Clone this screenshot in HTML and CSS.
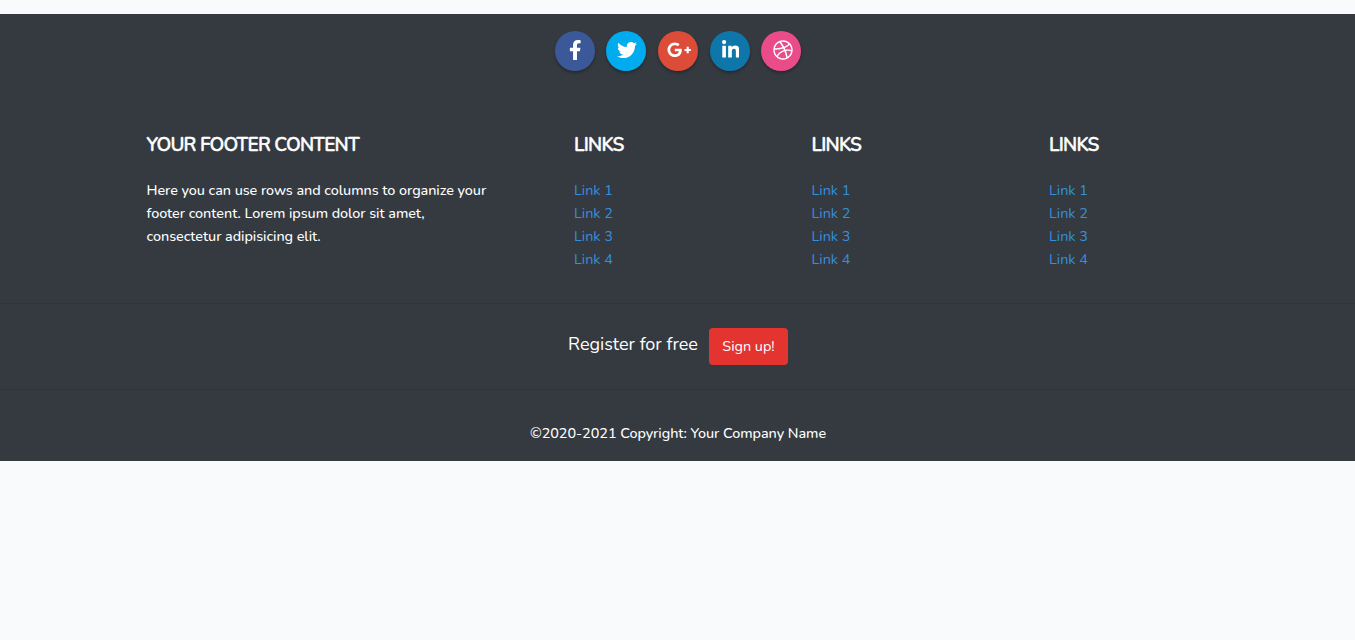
FILE: index.html
```html
<!DOCTYPE html>
<html lang="en">
<head>
<meta charset="utf-8">
<title>Footer</title>
<link rel="stylesheet" href="styles.css">
</head>
<body>
<footer class="footer">
  <ul class="social">
    <li><a class="social-btn facebook" href="#" aria-label="Facebook"><svg viewBox="0 0 320 512" width="12.5" height="20"><path d="M279.14 288l14.22-92.66h-88.91v-60.13c0-25.35 12.42-50.06 52.24-50.06h40.42V6.26S260.43 0 225.36 0c-73.22 0-121.08 44.38-121.08 124.72v70.62H22.89V288h81.39v224h100.17V288z"/></svg></a></li>
    <li><a class="social-btn twitter" href="#" aria-label="Twitter"><svg viewBox="0 0 512 512" width="20" height="20"><path d="M459.37 151.716c.325 4.548.325 9.097.325 13.645 0 138.72-105.583 298.558-298.558 298.558-59.452 0-114.68-17.219-161.137-47.106 8.447.974 16.568 1.299 25.34 1.299 49.055 0 94.213-16.568 130.274-44.832-46.132-.975-84.792-31.188-98.112-72.772 6.498.974 12.995 1.624 19.818 1.624 9.421 0 18.843-1.3 27.614-3.573-48.081-9.747-84.143-51.98-84.143-102.985v-1.299c13.969 7.797 30.214 12.67 47.431 13.319-28.264-18.843-46.781-51.005-46.781-87.391 0-19.492 5.197-37.36 14.294-52.954 51.655 63.675 129.3 105.258 216.365 109.807-1.624-7.797-2.599-15.918-2.599-24.04 0-57.828 46.782-104.934 104.934-104.934 30.213 0 57.502 12.67 76.67 33.137 23.715-4.548 46.456-13.32 66.599-25.34-7.798 24.366-24.366 44.833-46.132 57.827 21.117-2.273 41.584-8.122 60.426-16.243-14.292 20.791-32.161 39.308-52.628 54.253z"/></svg></a></li>
    <li><a class="social-btn google" href="#" aria-label="Google Plus"><svg viewBox="0 0 640 512" width="24.4" height="19.5"><path d="M386.061 228.496c1.834 9.692 3.143 19.384 3.143 31.956C389.204 370.205 315.599 448 204.8 448c-106.084 0-192-85.915-192-192s85.916-192 192-192c51.864 0 95.083 18.859 128.611 50.292l-52.126 50.03c-14.145-13.621-39.028-29.599-76.485-29.599-65.484 0-118.92 54.221-118.92 121.277 0 67.056 53.436 121.277 118.92 121.277 75.961 0 104.513-54.745 108.965-82.773H204.8v-66.009h181.261zm185.406 6.437V179.2h-56.001v55.733h-55.733v56.001h55.733v55.733h56.001v-55.733H627.2v-56.001h-55.733z"/></svg></a></li>
    <li><a class="social-btn linkedin" href="#" aria-label="LinkedIn"><svg viewBox="0 0 448 512" width="17.5" height="20"><path d="M100.28 448H7.4V148.9h92.88zM53.79 108.1C24.09 108.1 0 83.5 0 53.8a53.79 53.79 0 0 1 107.58 0c0 29.7-24.1 54.3-53.79 54.3zM447.9 448h-92.68V302.4c0-34.7-.7-79.2-48.29-79.2-48.29 0-55.69 37.7-55.69 76.7V448h-92.78V148.9h89.08v40.8h1.3c12.4-23.5 42.69-48.3 87.88-48.3 94 0 111.28 61.9 111.28 142.3V448z"/></svg></a></li>
    <li><a class="social-btn dribbble" href="#" aria-label="Dribbble"><svg viewBox="0 0 512 512" width="20" height="20"><path d="M256 8C119.252 8 8 119.252 8 256s111.252 248 248 248 248-111.252 248-248S392.748 8 256 8zm163.97 114.366c29.503 36.046 47.369 81.957 47.835 131.955-6.984-1.477-77.018-15.682-147.502-6.818-5.752-14.041-11.181-26.393-18.617-41.614 78.321-31.977 113.818-77.482 118.284-83.523zM396.421 97.87c-3.81 5.427-35.697 48.286-111.021 76.519-34.712-63.776-73.185-116.168-79.04-124.008 67.176-16.193 137.966 1.27 190.061 47.489zm-230.48-33.25c5.585 7.659 43.438 60.116 78.537 122.509-99.087 26.313-186.36 25.934-195.834 25.809C62.38 147.205 106.678 92.573 165.941 64.62zM44.17 256.323c0-2.166.043-4.322.108-6.473 9.268.19 111.92 1.513 217.706-30.146 6.064 11.868 11.857 23.915 17.174 35.949-76.599 21.575-146.194 83.527-180.531 142.306C64.794 360.405 44.17 310.73 44.17 256.323zm81.807 167.113c22.127-45.233 82.178-103.622 167.579-132.756 29.74 77.283 42.039 142.053 45.189 160.638-68.112 29.013-150.015 21.053-212.768-27.882zm248.38 8.489c-2.171-12.886-13.446-74.897-41.152-151.033 66.38-10.626 124.7 6.768 131.947 9.055-9.442 58.941-43.273 109.844-90.795 141.978z"/></svg></a></li>
  </ul>

  <div class="columns">
    <section>
      <h5 class="title">Your Footer Content</h5>
      <p class="about">Here you can use rows and columns to organize your<br>footer content. Lorem ipsum dolor sit amet,<br>consectetur adipisicing elit.</p>
    </section>
    <section>
      <h5 class="title">Links</h5>
      <ul class="links"><li><a href="#">Link 1</a></li><li><a href="#">Link 2</a></li><li><a href="#">Link 3</a></li><li><a href="#">Link 4</a></li></ul>
    </section>
    <section>
      <h5 class="title">Links</h5>
      <ul class="links"><li><a href="#">Link 1</a></li><li><a href="#">Link 2</a></li><li><a href="#">Link 3</a></li><li><a href="#">Link 4</a></li></ul>
    </section>
    <section>
      <h5 class="title">Links</h5>
      <ul class="links"><li><a href="#">Link 1</a></li><li><a href="#">Link 2</a></li><li><a href="#">Link 3</a></li><li><a href="#">Link 4</a></li></ul>
    </section>
  </div>

  <div class="register">
    <h5 class="register-text">Register for free</h5>
    <a class="signup" href="#">Sign up!</a>
  </div>

  <div class="copyright">©2020-2021 Copyright: Your Company Name</div>
</footer>
</body>
</html>
```
FILE: styles.css
```css
* { box-sizing: border-box; }
body {
  margin: 0;
  padding-top: 14px;
  background: #f8fafc;
  color: #fff;
  font-family: "Nunito", "Open Sans", sans-serif;
  font-size: 14.4px;
  line-height: 23px;
}
ul { list-style: none; margin: 0; padding: 0; }
a { text-decoration: none; }
.footer { height: 447px; background: #343a40; }
.social {
  display: flex;
  justify-content: center;
  gap: 11.6px;
  padding: 17px 0 0 1px;
  height: 117px;
}
.social-btn {
  display: flex;
  align-items: center;
  justify-content: center;
  width: 40px;
  height: 40px;
  border-radius: 50%;
  padding: 0 0 2px 3px;
  box-shadow: 0 2px 3px rgba(0, 0, 0, .28);
}
.social-btn svg { fill: #fff; flex: none; }
.facebook { background: #3b5998; padding-left: 1px; }
.twitter { background: #00acee; padding-left: 2px; }
.google { background: #dd4b39; }
.linkedin { background: #0e76a8; padding-left: 2px; }
.dribbble { background: #ea4c89; }
.columns {
  display: grid;
  grid-template-columns: 427.5px 237.5px 237.5px 1fr;
  height: 172px;
  padding-left: 146.5px;
}
.title {
  margin: 2px 0 21px;
  font-size: 19px;
  line-height: 25px;
  font-weight: 600;
  letter-spacing: -.75px;
  text-transform: uppercase;
  -webkit-text-stroke: .4px #fff;
}
.about { margin: 0; white-space: nowrap; font-weight: 500; letter-spacing: -.055px; }
.links a { color: #3490dc; }
.register {
  display: flex;
  justify-content: center;
  gap: 11px;
  height: 87px;
  padding: 24px 0 0 1px;
  border-top: 1px solid #2f343a;
  border-bottom: 1px solid #2f343a;
}
.register-text {
  margin: 4px 0 0;
  font-size: 18px;
  font-weight: 400;
  line-height: 24px;
}
.signup {
  width: 79px;
  height: 37px;
  border-radius: 4px;
  background: #e3342f;
  color: #fff;
  line-height: 37px;
  text-align: center;
}
.copyright { padding: 32px 0 0 1px; text-align: center; font-weight: 500; letter-spacing: -.04px; }
```
